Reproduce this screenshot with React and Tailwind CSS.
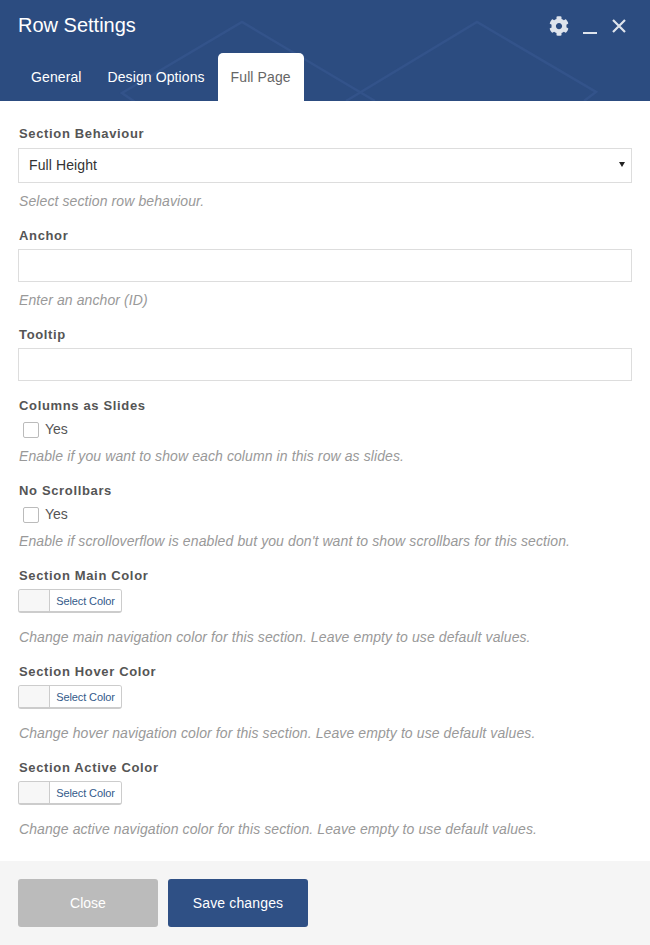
import { FaCog } from "react-icons/fa";

const font = "font-['Liberation_Sans',Arial,sans-serif]";

function Label({ className = "", children }) {
  return (
    <div className={`h-5 text-[13px] leading-5 font-bold tracking-[0.65px] text-[#555] pl-px ${className}`}>
      {children}
    </div>
  );
}

function Hint({ className = "", children }) {
  return (
    <p className={`h-5 text-sm leading-5 italic tracking-[0.1px] text-[#999] pl-px ${className}`}>
      {children}
    </p>
  );
}

function YesCheck() {
  return (
    <label className="flex items-center h-5 mt-1 pl-[5px] text-sm text-[#555]">
      <span className="w-4 h-4 border border-[#bbb] rounded-[2px] bg-white" />
      <span className="ml-[6px] -mt-[2px]">Yes</span>
    </label>
  );
}

function ColorPicker() {
  return (
    <div className="flex w-[104px] h-6 mt-[3px] border border-[#ccc] border-b-2 rounded-[3px] overflow-hidden">
      <span className="w-[31px] bg-[#f7f7f7] border-r border-[#ccc]" />
      <span className="flex-1 bg-white text-[11px] leading-[23px] tracking-[-0.1px] text-center text-[#335a8a]">
        Select Color
      </span>
    </div>
  );
}

export default function App() {
  return (
    <div className={`${font} w-[650px] h-[945px] bg-white flex flex-col`}>
      <header className="relative h-[101px] bg-[#2c4c80] overflow-hidden shrink-0">
        <svg
          className="absolute inset-0 w-full h-full"
          viewBox="0 0 650 101"
          fill="none"
          stroke="#33538a"
          strokeWidth="2.5"
        >
          <path d="M135 102 L122 93 L242 22 L375 101" />
          <path d="M346 101 L477 22 L596 92 L584 101" />
        </svg>
        <div className="relative flex flex-col h-full">
          <div className="flex items-start justify-between pl-[18px] pr-[24px] pt-[13px]">
            <h1 className="text-[20px] leading-6 text-white">Row Settings</h1>
            <div className="flex items-center mt-[3px] text-[#dfe4ec]">
              <FaCog className="w-5 h-5" />
              <span className="w-[14px] h-[2px] ml-[14px] mt-[14px] bg-current" />
              <svg viewBox="0 0 14 14" className="w-[14px] h-[14px] ml-[15px]" fill="none" stroke="currentColor" strokeWidth="2.2">
                <path d="M1 1 L13 13 M13 1 L1 13" />
              </svg>
            </div>
          </div>
          <nav className="flex items-end mt-auto pl-[18px] text-sm tracking-[0.1px]">
            <a className="pl-[13px] pr-[14px] h-12 leading-12 text-white">General</a>
            <a className="px-[12px] h-12 leading-12 text-white">Design Options</a>
            <a className="w-[86px] ml-px h-12 leading-12 text-center bg-white text-[#666] rounded-t-[5px]">Full Page</a>
          </nav>
        </div>
      </header>

      <main className="flex-1 px-[18px] pt-[23px]">
        <Label>Section Behaviour</Label>
        <div className="relative mt-1">
          <select className="block w-full h-[35px] pl-[10px] pb-[2px] border border-[#ddd] bg-white text-sm tracking-[0.1px] text-[#333] appearance-none">
            <option>Full Height</option>
          </select>
          <svg viewBox="0 0 6 5" className="absolute right-[7px] top-[14px] w-[6px] h-[5px] fill-[#222]">
            <path d="M0 0 H6 L3 5 Z" />
          </svg>
        </div>
        <Hint className="mt-2">Select section row behaviour.</Hint>

        <Label className="mt-[15px]">Anchor</Label>
        <input className="block w-full h-[33px] mt-[3px] border border-[#ddd]" />
        <Hint className="mt-2">Enter an anchor (ID)</Hint>

        <Label className="mt-[15px]">Tooltip</Label>
        <input className="block w-full h-[33px] mt-[3px] border border-[#ddd]" />

        <Label className="mt-[15px]">Columns as Slides</Label>
        <YesCheck />
        <Hint className="mt-[6px]">Enable if you want to show each column in this row as slides.</Hint>

        <Label className="mt-[15px]">No Scrollbars</Label>
        <YesCheck />
        <Hint className="mt-[6px]">Enable if scrolloverflow is enabled but you don't want to show scrollbars for this section.</Hint>

        <Label className="mt-[15px]">Section Main Color</Label>
        <ColorPicker />
        <Hint className="mt-[14px]">Change main navigation color for this section. Leave empty to use default values.</Hint>

        <Label className="mt-[15px]">Section Hover Color</Label>
        <ColorPicker />
        <Hint className="mt-[14px]">Change hover navigation color for this section. Leave empty to use default values.</Hint>

        <Label className="mt-[15px]">Section Active Color</Label>
        <ColorPicker />
        <Hint className="mt-[14px]">Change active navigation color for this section. Leave empty to use default values.</Hint>
      </main>

      <footer className="h-[84px] shrink-0 bg-[#f5f5f5] flex gap-[10px] px-[18px] pt-[18px]">
        <button className="w-[140px] h-12 rounded-[3px] bg-[#bbb] text-sm text-white">Close</button>
        <button className="w-[140px] h-12 rounded-[3px] bg-[#2f5085] text-sm tracking-[0.15px] text-white">Save changes</button>
      </footer>
    </div>
  );
}
